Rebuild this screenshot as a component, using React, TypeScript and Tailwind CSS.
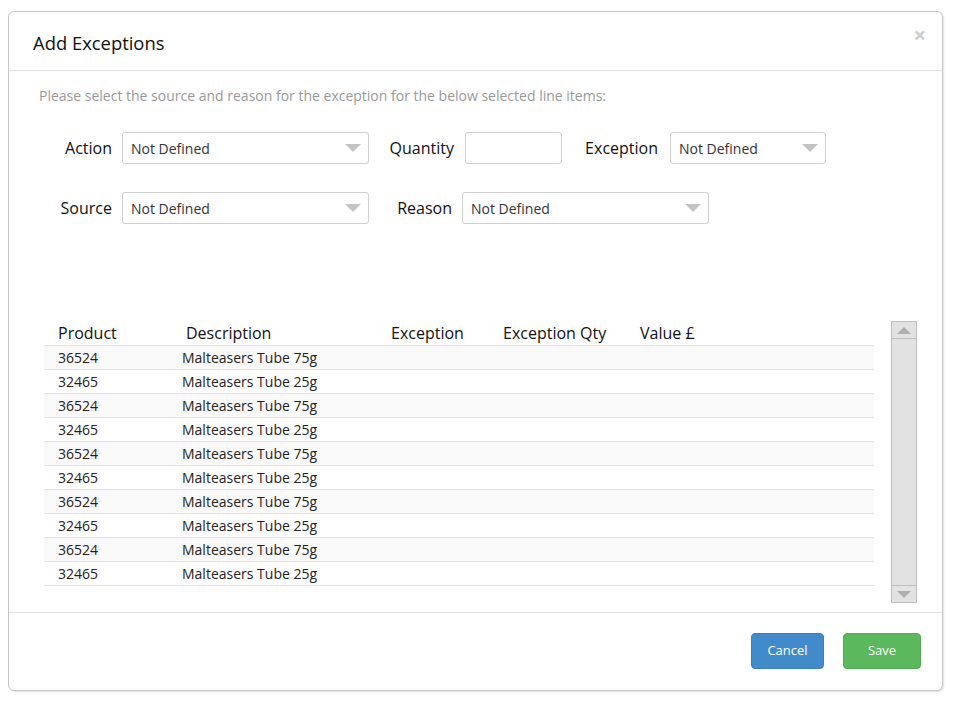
import React from 'react';

const rows = [
  { product: '36524', description: 'Malteasers Tube 75g' },
  { product: '32465', description: 'Malteasers Tube 25g' },
  { product: '36524', description: 'Malteasers Tube 75g' },
  { product: '32465', description: 'Malteasers Tube 25g' },
  { product: '36524', description: 'Malteasers Tube 75g' },
  { product: '32465', description: 'Malteasers Tube 25g' },
  { product: '36524', description: 'Malteasers Tube 75g' },
  { product: '32465', description: 'Malteasers Tube 25g' },
  { product: '36524', description: 'Malteasers Tube 75g' },
  { product: '32465', description: 'Malteasers Tube 25g' },
];

function Caret() {
  return (
    <svg width="16" height="8" viewBox="0 0 16 8" className="shrink-0">
      <path d="M0 0h16L8 8z" fill="#c4c4c4" />
    </svg>
  );
}

function Select({ width }: { width: string }) {
  return (
    <div
      className={`${width} h-[32px] flex items-center justify-between pl-[8px] pr-[7px] border border-[#cfcfcf] rounded-[3px] bg-white text-[14px] text-[#333]`}
    >
      <span>Not Defined</span>
      <Caret />
    </div>
  );
}

export default function App() {
  return (
    <div className="w-[958px] h-[708px] bg-white font-['Open_Sans','Noto_Sans',sans-serif] pt-[11px] pl-[8px]">
      <div className="w-[935px] h-[680px] flex flex-col border border-[#c6c6c6] rounded-[6px] bg-white shadow-[1px_1px_2px_rgba(0,0,0,0.12)]">
        {/* Header */}
        <div className="h-[59px] shrink-0 flex items-center justify-between pl-[24px] pr-[16px] border-b border-[#e3e3e3]">
          <h1 className="text-[18.4px] text-[#111] leading-none mt-[4px]">Add Exceptions</h1>
          <span className="text-[22px] font-bold text-[#cccccc] leading-none -mt-[14px]">×</span>
        </div>

        {/* Body */}
        <div className="flex-1 flex flex-col pt-[16px] pl-[30px]">
          <p className="text-[14px] leading-[18px] text-[#999]">
            Please select the source and reason for the exception for the below selected line items:
          </p>

          <div className="mt-[27px] flex items-center text-[16px] text-[#111]">
            <span className="w-[73px] text-right">Action</span>
            <div className="ml-[10px]">
              <Select width="w-[247px]" />
            </div>
            <span className="w-[85px] text-right">Quantity</span>
            <div className="ml-[11px] w-[97px] h-[32px] border border-[#cfcfcf] rounded-[3px]" />
            <span className="w-[96px] text-right">Exception</span>
            <div className="ml-[12px]">
              <Select width="w-[156px]" />
            </div>
          </div>

          <div className="mt-[28px] flex items-center text-[16px] text-[#111]">
            <span className="w-[73px] text-right">Source</span>
            <div className="ml-[10px]">
              <Select width="w-[247px]" />
            </div>
            <span className="w-[83px] text-right">Reason</span>
            <div className="ml-[10px]">
              <Select width="w-[247px]" />
            </div>
          </div>

          {/* Table */}
          <div className="mt-[97px] flex pl-[5px]">
            <div className="w-[830px]">
              <div className="h-[25px] flex items-center border-b border-[#e3e3e3] text-[16px] text-[#111]">
                <span className="w-[128px] pl-[14px]">Product</span>
                <span className="w-[205px] pl-[14px]">Description</span>
                <span className="w-[112px] pl-[14px]">Exception</span>
                <span className="w-[137px] pl-[14px]">Exception Qty</span>
                <span className="pl-[14px]">Value £</span>
              </div>
              {rows.map((row, i) => (
                <div
                  key={i}
                  className={`h-[24px] flex items-center border-b border-[#e3e3e3] text-[14px] text-[#222] ${
                    i % 2 === 0 ? 'bg-[#f9f9f9]' : 'bg-white'
                  }`}
                >
                  <span className="w-[128px] pl-[14px]">{row.product}</span>
                  <span className="w-[205px] pl-[10px]">{row.description}</span>
                </div>
              ))}
            </div>

            {/* Scrollbar */}
            <div className="ml-[17px] w-[26px] h-[282px] flex flex-col border border-[#bdbdbd] bg-[#e2e2e2]">
              <div className="h-[17px] shrink-0 flex items-center justify-center border-b border-[#bdbdbd]">
                <svg width="14" height="7" viewBox="0 0 14 7">
                  <path d="M0 7h14L7 0z" fill="#b0b0b0" />
                </svg>
              </div>
              <div className="flex-1" />
              <div className="h-[17px] shrink-0 flex items-center justify-center border-t border-[#bdbdbd]">
                <svg width="14" height="7" viewBox="0 0 14 7">
                  <path d="M0 0h14L7 7z" fill="#b0b0b0" />
                </svg>
              </div>
            </div>
          </div>
        </div>

        {/* Footer */}
        <div className="h-[78px] shrink-0 flex items-start justify-end gap-[19px] pt-[20px] pr-[21px] border-t border-[#e3e3e3]">
          <button className="w-[73px] h-[36px] rounded-[4px] bg-[#428bca] border border-[#3a7fbd] text-white text-[13px]">
            Cancel
          </button>
          <button className="w-[78px] h-[36px] rounded-[4px] bg-[#5cb85c] border border-[#52ad52] text-white text-[13px]">
            Save
          </button>
        </div>
      </div>
    </div>
  );
}
